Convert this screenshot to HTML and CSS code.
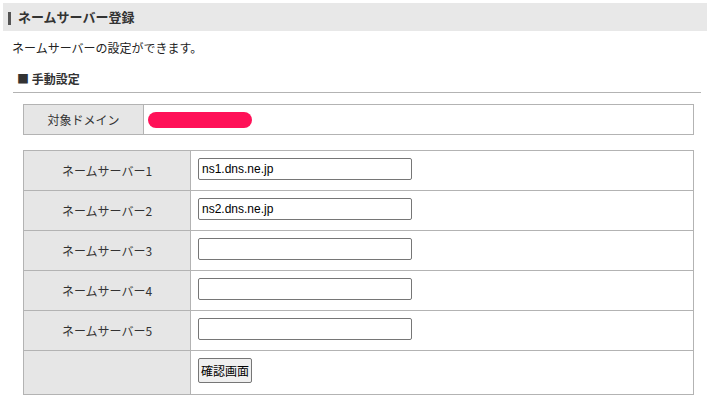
FILE: index.html
```html
<!DOCTYPE html>
<html lang="ja">
<head>
  <meta charset="UTF-8" />
  <title>ネームサーバー登録</title>
  <link rel="stylesheet" href="styles.css">
</head>
<body>
  <h2 class="page-title">ネームサーバー登録</h2>
  <p class="lead">ネームサーバーの設定ができます。</p>

  <h3 class="section-title">■ 手動設定</h3>

  <table class="form-table domain-table">
    <tr>
      <th>対象ドメイン</th>
      <td><span class="masked"></span></td>
    </tr>
  </table>

  <form class="ns-form">
    <table class="form-table ns-table">
      <tr>
        <th>ネームサーバー1</th>
        <td><input type="text" value="ns1.dns.ne.jp" /></td>
      </tr>
      <tr>
        <th>ネームサーバー2</th>
        <td><input type="text" value="ns2.dns.ne.jp" /></td>
      </tr>
      <tr>
        <th>ネームサーバー3</th>
        <td><input type="text" /></td>
      </tr>
      <tr>
        <th>ネームサーバー4</th>
        <td><input type="text" /></td>
      </tr>
      <tr>
        <th>ネームサーバー5</th>
        <td><input type="text" /></td>
      </tr>
      <tr class="submit-row">
        <th></th>
        <td><button type="button">確認画面</button></td>
      </tr>
    </table>
  </form>
</body>
</html>
```

FILE: styles.css
```css
:root {
  --border: #b3b3b3;
  --label-bg: #e6e6e6;
  --text: #333;
}

body {
  margin: 3px 0 0 3px;
  font-family: "Noto Sans CJK JP", "Liberation Sans", sans-serif;
  font-size: 12px;
  color: var(--text);
  background: #fff;
}

.page-title {
  margin: 0;
  height: 28px;
  line-height: 28px;
  background: #e8e8e8;
  font-size: 13px;
  font-weight: bold;
  padding-left: 15px;
  position: relative;
}

.page-title::before {
  content: "";
  position: absolute;
  left: 5px;
  top: 9px;
  width: 3px;
  height: 13px;
  background: #555;
}

.lead {
  margin: 8px 0 0 9px;
  line-height: 18px;
  color: #222;
}

.section-title {
  margin: 14px 6px 0 10px;
  padding: 0 0 5px 4px;
  font-size: 12px;
  font-weight: bold;
  line-height: 16px;
  border-bottom: 1px solid var(--border);
}

.form-table {
  margin-left: 20px;
  width: 671px;
  border-collapse: collapse;
}

.form-table th,
.form-table td {
  border: 1px solid var(--border);
  padding: 0;
}

.form-table th {
  background: var(--label-bg);
  font-weight: normal;
  text-align: center;
}

.domain-table {
  margin-top: 11px;
}

.domain-table th {
  width: 119px;
  height: 29px;
}

.domain-table td {
  padding-left: 4px;
}

.masked {
  display: block;
  width: 104px;
  height: 16px;
  border-radius: 8px;
  background: #ff1158;
}

.ns-form {
  margin: 15px 0 0;
}

.ns-table th {
  width: 166px;
  height: 39px;
}

.ns-table td {
  vertical-align: top;
  padding: 7px 0 0 7px;
  height: 32px;
}

.ns-table input {
  display: block;
  box-sizing: border-box;
  width: 214px;
  height: 22px;
  margin: 0;
  padding: 1px 3px;
  border: 1px solid #767676;
  border-radius: 2px;
  font-family: "Liberation Sans", sans-serif;
  font-size: 12px;
  color: #000;
}

.submit-row th {
  height: 43px;
}

.submit-row td {
  height: 36px;
}

.submit-row button {
  display: block;
  height: 25px;
  padding: 0 2px;
  font-family: "Noto Sans CJK JP", sans-serif;
  font-size: 12px;
  color: #000;
  background: #efefef;
  border: 1px solid #767676;
  border-radius: 2px;
}
```
